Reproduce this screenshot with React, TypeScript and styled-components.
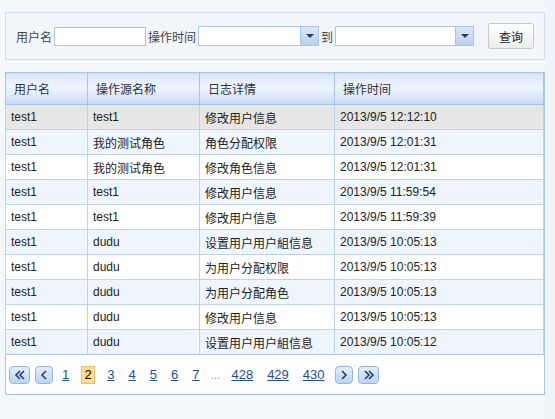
import React from 'react'
import styled, { createGlobalStyle } from 'styled-components'

type Row = {
  user: string
  source: string
  detail: string
  time: string
}

const rows: Row[] = [
  { user: 'test1', source: 'test1', detail: '修改用户信息', time: '2013/9/5 12:12:10' },
  { user: 'test1', source: '我的测试角色', detail: '角色分配权限', time: '2013/9/5 12:01:31' },
  { user: 'test1', source: '我的测试角色', detail: '修改角色信息', time: '2013/9/5 12:01:31' },
  { user: 'test1', source: 'test1', detail: '修改用户信息', time: '2013/9/5 11:59:54' },
  { user: 'test1', source: 'test1', detail: '修改用户信息', time: '2013/9/5 11:59:39' },
  { user: 'test1', source: 'dudu', detail: '设置用户用户組信息', time: '2013/9/5 10:05:13' },
  { user: 'test1', source: 'dudu', detail: '为用户分配权限', time: '2013/9/5 10:05:13' },
  { user: 'test1', source: 'dudu', detail: '为用户分配角色', time: '2013/9/5 10:05:13' },
  { user: 'test1', source: 'dudu', detail: '修改用户信息', time: '2013/9/5 10:05:13' },
  { user: 'test1', source: 'dudu', detail: '设置用户用户組信息', time: '2013/9/5 10:05:12' },
]

const pages = ['1', '2', '3', '4', '5', '6', '7']

const GlobalStyle = createGlobalStyle`
  html, body {
    margin: 0;
    padding: 0;
    background: #eff4f9;
  }
  body {
    font-family: "Liberation Sans", "Noto Sans CJK SC", sans-serif;
    font-size: 12px;
    color: #333;
  }
`

const Chevron: React.FC<{ dir: 'left' | 'right'; double?: boolean }> = ({ dir, double }) => {
  const pts = dir === 'left' ? ['7,2 3,6 7,10', '11,2 7,6 11,10'] : ['3,2 7,6 3,10', '7,2 11,6 7,10']
  const single = dir === 'left' ? '8,2 4,6 8,10' : '5,2 9,6 5,10'
  return (
    <svg width="13" height="12" viewBox="0 0 13 12">
      {double ? (
        pts.map(p => <polyline key={p} points={p} fill="none" stroke="#1f3f78" strokeWidth="1.6" />)
      ) : (
        <polyline points={single} fill="none" stroke="#1f3f78" strokeWidth="1.6" />
      )}
    </svg>
  )
}

const App: React.FC = () => (
  <Page>
    <GlobalStyle />
    <Content>
      <SearchPanel>
        <Label>用户名</Label>
        <TextInput />
        <Label>操作时间</Label>
        <Select $width={121}>
          <SelectArrow />
        </Select>
        <Label>到</Label>
        <Select $width={139}>
          <SelectArrow />
        </Select>
        <QueryButton>查询</QueryButton>
      </SearchPanel>

      <Grid>
        <Table>
          <colgroup>
            <col style={{ width: 82 }} />
            <col style={{ width: 112 }} />
            <col style={{ width: 135 }} />
            <col />
          </colgroup>
          <thead>
            <tr>
              <Th>用户名</Th>
              <Th>操作源名称</Th>
              <Th>日志详情</Th>
              <Th>操作时间</Th>
            </tr>
          </thead>
          <tbody>
            {rows.map((r, i) => (
              <Tr key={i} $kind={i === 0 ? 'selected' : i % 2 === 1 ? 'alt' : 'plain'}>
                <Td>{r.user}</Td>
                <Td>{r.source}</Td>
                <Td>{r.detail}</Td>
                <Td>{r.time}</Td>
              </Tr>
            ))}
          </tbody>
        </Table>
        <Pager>
          <PageButton $wide>
            <Chevron dir="left" double />
          </PageButton>
          <PageButton>
            <Chevron dir="left" />
          </PageButton>
          <PageLinks>
            {pages.map(p => (p === '2' ? <Current key={p}>{p}</Current> : <PageLink key={p}>{p}</PageLink>))}
            <Dots>...</Dots>
            <PageLink>428</PageLink>
            <PageLink>429</PageLink>
            <PageLink>430</PageLink>
          </PageLinks>
          <PageButton>
            <Chevron dir="right" />
          </PageButton>
          <PageButton $wide>
            <Chevron dir="right" double />
          </PageButton>
        </Pager>
      </Grid>
    </Content>
  </Page>
)

const Page = styled.div`
  min-height: 419px;
  background: #eff4f9;
`

const Content = styled.div`
  width: 545px;
  min-height: 419px;
  padding: 12px 0 0 5px;
  box-sizing: border-box;
  background: #f5f8fb;
`

const SearchPanel = styled.div`
  width: 540px;
  height: 48px;
  box-sizing: border-box;
  border: 1px solid #cfdce8;
  background: #f2f6fa;
  display: flex;
  align-items: center;
  padding: 0 10px;
`

const Label = styled.span`
  font-size: 12px;
  color: #444;
  margin: 0 2px;
  &:first-child {
    margin-left: 0;
  }
`

const TextInput = styled.div`
  width: 92px;
  height: 19px;
  box-sizing: border-box;
  background: #fff;
  border: 1px solid #a9c4ec;
`

const Select = styled.div<{ $width: number }>`
  width: ${p => p.$width}px;
  height: 20px;
  box-sizing: border-box;
  background: #fff;
  border: 1px solid #a9c4ec;
  display: flex;
  justify-content: flex-end;
`

const SelectArrow = styled.div`
  width: 18px;
  height: 100%;
  box-sizing: border-box;
  background: linear-gradient(#dce8f9, #b9d0f1);
  border-left: 1px solid #a9c4ec;
  display: flex;
  align-items: center;
  justify-content: center;
  &::after {
    content: '';
    border-left: 4px solid transparent;
    border-right: 4px solid transparent;
    border-top: 4px solid #2c3c55;
  }
`

const QueryButton = styled.button`
  margin-left: auto;
  width: 46px;
  height: 26px;
  border: 1px solid #c8c8c8;
  border-radius: 3px;
  background: linear-gradient(#ffffff, #ececec);
  font-family: "Liberation Sans", "Noto Sans CJK SC", sans-serif;
  font-size: 12px;
  color: #222;
  padding: 0;
`

const Grid = styled.div`
  width: 540px;
  margin-top: 12px;
  box-sizing: border-box;
  border: 1px solid #a9c3e8;
  border-top: none;
  background: #fff;
`

const Table = styled.table`
  width: 539px;
  border-collapse: collapse;
  table-layout: fixed;
  margin-left: -1px;
`

const Th = styled.th`
  height: 31px;
  padding: 0 0 0 8px;
  text-align: left;
  font-weight: normal;
  color: #333;
  border: 1px solid #a9c3e8;
  background: linear-gradient(#d9e6f9 0%, #edf4fd 40%, #e2ecfa 65%, #c6daf5 100%);
`

const Tr = styled.tr<{ $kind: 'selected' | 'alt' | 'plain' }>`
  background: ${p => (p.$kind === 'selected' ? '#e6e6e6' : p.$kind === 'alt' ? '#eef5fd' : '#ffffff')};
`

const Td = styled.td`
  height: 24px;
  padding: 0 0 0 5px;
  border: 1px solid #bdd2ef;
  color: #222;
  white-space: nowrap;
  overflow: hidden;
`

const Pager = styled.div`
  height: 39px;
  display: flex;
  align-items: center;
  padding-left: 3px;
  border-top: 1px solid #a9c3e8;
  margin-top: -1px;
  gap: 5px;
`

const PageButton = styled.div<{ $wide?: boolean }>`
  width: ${p => (p.$wide ? 21 : 18)}px;
  height: 18px;
  box-sizing: border-box;
  border: 1px solid #94b4de;
  border-radius: 4px;
  background: linear-gradient(#e4eefb, #bdd4f2);
  display: flex;
  align-items: center;
  justify-content: center;
`

const PageLinks = styled.div`
  display: flex;
  align-items: center;
  gap: 14px;
  margin: 0 5px 0 4px;
`

const PageLink = styled.span`
  color: #1f4d9a;
  text-decoration: underline;
  font-size: 13px;
`

const Current = styled.span`
  width: 14px;
  height: 18px;
  box-sizing: border-box;
  margin: 0 -2px;
  background: #fedd8c;
  border: 1px solid #f0c060;
  font-size: 13px;
  color: #000;
  display: flex;
  align-items: center;
  justify-content: center;
`

const Dots = styled.span`
  color: #99a;
  margin: 0 -3px;
`

export default App
